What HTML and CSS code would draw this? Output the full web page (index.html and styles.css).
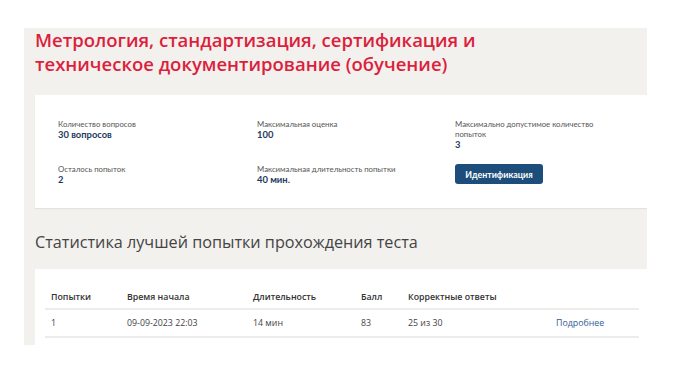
FILE: index.html
```html
<!DOCTYPE html>
<html lang="ru">
<head>
<meta charset="utf-8">
<title>Тест</title>
<link rel="stylesheet" href="styles.css">
</head>
<body>
<div class="panel">
  <h1 class="title">Метрология, стандартизация, сертификация и<br>техническое документирование (обучение)</h1>
  <div class="card info">
    <div class="item">
      <div class="label">Количество вопросов</div>
      <div class="value">30 вопросов</div>
    </div>
    <div class="item">
      <div class="label">Максимальная оценка</div>
      <div class="value">100</div>
    </div>
    <div class="item">
      <div class="label">Максимально допустимое количество<br>попыток</div>
      <div class="value">3</div>
    </div>
    <div class="item">
      <div class="label">Осталось попыток</div>
      <div class="value">2</div>
    </div>
    <div class="item">
      <div class="label">Максимальная длительность попытки</div>
      <div class="value">40 мин.</div>
    </div>
    <div class="item">
      <button class="btn">Идентификация</button>
    </div>
  </div>
  <h2 class="subtitle">Статистика лучшей попытки прохождения теста</h2>
  <div class="card stats">
    <table class="table">
      <thead>
        <tr>
          <th class="c1">Попытки</th>
          <th class="c2">Время начала</th>
          <th class="c3">Длительность</th>
          <th class="c4">Балл</th>
          <th class="c5">Корректные ответы</th>
          <th class="c6"></th>
        </tr>
      </thead>
      <tbody>
        <tr>
          <td>1</td>
          <td>09-09-2023 22:03</td>
          <td>14 мин</td>
          <td>83</td>
          <td>25 из 30</td>
          <td><a class="link" href="#">Подробнее</a></td>
        </tr>
      </tbody>
    </table>
  </div>
</div>
</body>
</html>
```

FILE: styles.css
```css
html, body {
  margin: 0;
  padding: 0;
  background: #ffffff;
}

body {
  font-family: "Open Sans", "Noto Sans", sans-serif;
  color: #333;
}

.panel {
  margin: 28px 0 0 24px;
  width: 612px;
  height: 317px;
  padding-left: 11px;
  background: #f2f1ee;
  overflow: hidden;
}

.title {
  margin: 0;
  font-size: 18.5px;
  line-height: 24px;
  font-weight: 600;
  color: #dc1f3d;
}

.card {
  background: #ffffff;
}

.info {
  margin-top: 19px;
  padding: 24px 0 23px 23px;
  display: grid;
  grid-template-columns: 199px 198px 1fr;
  row-gap: 14px;
  box-shadow: 0 1px 1px rgba(0, 0, 0, 0.06);
  font-family: "Lato", "Open Sans", sans-serif;
}

.label {
  font-size: 7.8px;
  line-height: 10px;
  color: #555;
}

.value {
  font-size: 9.4px;
  line-height: 11px;
  font-weight: 700;
  color: #1e3a5e;
}

.btn {
  display: block;
  width: 88px;
  height: 20px;
  padding: 0;
  border: none;
  border-radius: 3px;
  background: #1d4e7b;
  color: #ffffff;
  font-family: "Lato", "Open Sans", sans-serif;
  font-size: 8.8px;
  font-weight: 700;
}

.subtitle {
  margin: 22px 0 15px 0;
  font-size: 16.2px;
  line-height: 24px;
  font-weight: 400;
  color: #444;
}

.stats {
  padding: 16px 8px 20px 10px;
}

.table {
  width: 100%;
  border-collapse: collapse;
  font-size: 8.8px;
}

.table th {
  text-align: left;
  font-weight: 600;
  color: #333;
  height: 23px;
  padding: 0 0 0 6px;
  border-bottom: 2px solid #ececec;
}

.table td {
  height: 26px;
  padding: 0 0 0 6px;
  color: #444;
  border-bottom: 2px solid #ececec;
}

.c1 { width: 70px; }
.c2 { width: 120px; }
.c3 { width: 102px; }
.c4 { width: 41px; }
.c5 { width: 142px; }

.link {
  color: #2f5d99;
  text-decoration: none;
}
```
